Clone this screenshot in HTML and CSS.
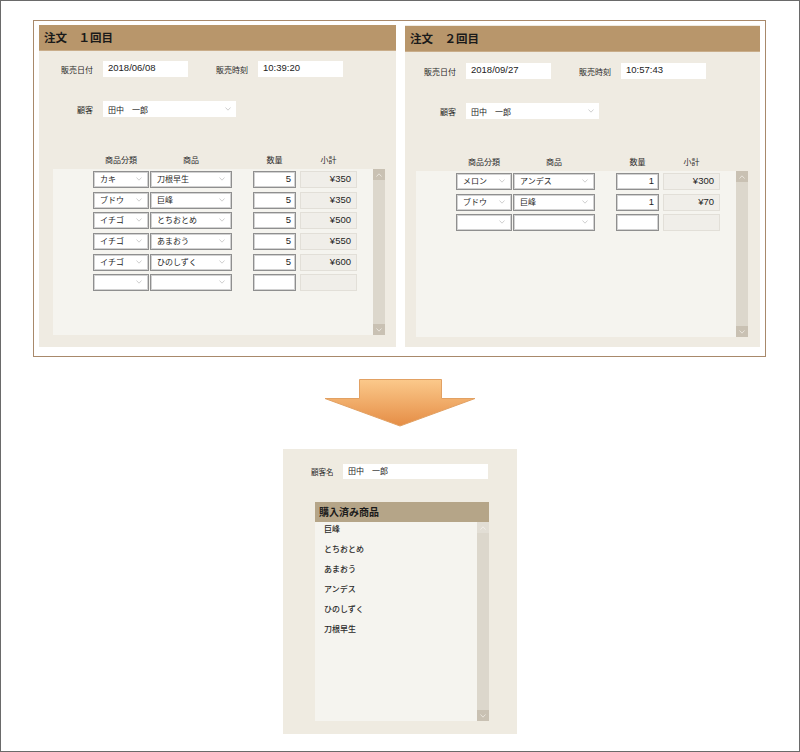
FILE: index.html
```html
<!DOCTYPE html>
<html lang="ja">
<head>
<meta charset="utf-8">
<title>注文履歴</title>
<link rel="stylesheet" href="styles.css">
</head>
<body>
<div class="screen">
  <div class="orders">
    <section class="order order--first">
      <h2 class="order-title">注文　１回目</h2>
      <div class="order-body">
        <div class="fields">
          <span class="lbl">販売日付</span><span class="box box--num">2018/06/08</span>
          <span class="lbl lbl--time">販売時刻</span><span class="box box--num">10:39:20</span>
        </div>
        <div class="fields customer">
          <span class="lbl">顧客</span>
          <span class="box box--select box--cust">田中　一郎<svg class="chev" width="6" height="4" viewBox="0 0 6 4"><polyline points="0.5,0.5 3,3.2 5.5,0.5" fill="none" stroke="#c4c4c4" stroke-width="0.8"/></svg></span>
        </div>
        <div class="grid-head">
          <span class="gh gh-cat">商品分類</span><span class="gh gh-prod">商品</span><span class="gh gh-qty">数量</span><span class="gh gh-sub">小計</span>
        </div>
        <div class="lines">
          <div class="rows">
            <div class="line">
              <span class="cell cell--sel cell--cat">カキ<svg class="chev" width="6" height="4" viewBox="0 0 6 4"><polyline points="0.5,0.5 3,3.2 5.5,0.5" fill="none" stroke="#c4c4c4" stroke-width="0.8"/></svg></span>
              <span class="cell cell--sel cell--prod">刀根早生<svg class="chev" width="6" height="4" viewBox="0 0 6 4"><polyline points="0.5,0.5 3,3.2 5.5,0.5" fill="none" stroke="#c4c4c4" stroke-width="0.8"/></svg></span>
              <span class="cell cell--qty">5</span><span class="cell cell--sub">¥350</span>
            </div>
            <div class="line">
              <span class="cell cell--sel cell--cat">ブドウ<svg class="chev" width="6" height="4" viewBox="0 0 6 4"><polyline points="0.5,0.5 3,3.2 5.5,0.5" fill="none" stroke="#c4c4c4" stroke-width="0.8"/></svg></span>
              <span class="cell cell--sel cell--prod">巨峰<svg class="chev" width="6" height="4" viewBox="0 0 6 4"><polyline points="0.5,0.5 3,3.2 5.5,0.5" fill="none" stroke="#c4c4c4" stroke-width="0.8"/></svg></span>
              <span class="cell cell--qty">5</span><span class="cell cell--sub">¥350</span>
            </div>
            <div class="line">
              <span class="cell cell--sel cell--cat">イチゴ<svg class="chev" width="6" height="4" viewBox="0 0 6 4"><polyline points="0.5,0.5 3,3.2 5.5,0.5" fill="none" stroke="#c4c4c4" stroke-width="0.8"/></svg></span>
              <span class="cell cell--sel cell--prod">とちおとめ<svg class="chev" width="6" height="4" viewBox="0 0 6 4"><polyline points="0.5,0.5 3,3.2 5.5,0.5" fill="none" stroke="#c4c4c4" stroke-width="0.8"/></svg></span>
              <span class="cell cell--qty">5</span><span class="cell cell--sub">¥500</span>
            </div>
            <div class="line">
              <span class="cell cell--sel cell--cat">イチゴ<svg class="chev" width="6" height="4" viewBox="0 0 6 4"><polyline points="0.5,0.5 3,3.2 5.5,0.5" fill="none" stroke="#c4c4c4" stroke-width="0.8"/></svg></span>
              <span class="cell cell--sel cell--prod">あまおう<svg class="chev" width="6" height="4" viewBox="0 0 6 4"><polyline points="0.5,0.5 3,3.2 5.5,0.5" fill="none" stroke="#c4c4c4" stroke-width="0.8"/></svg></span>
              <span class="cell cell--qty">5</span><span class="cell cell--sub">¥550</span>
            </div>
            <div class="line">
              <span class="cell cell--sel cell--cat">イチゴ<svg class="chev" width="6" height="4" viewBox="0 0 6 4"><polyline points="0.5,0.5 3,3.2 5.5,0.5" fill="none" stroke="#c4c4c4" stroke-width="0.8"/></svg></span>
              <span class="cell cell--sel cell--prod">ひのしずく<svg class="chev" width="6" height="4" viewBox="0 0 6 4"><polyline points="0.5,0.5 3,3.2 5.5,0.5" fill="none" stroke="#c4c4c4" stroke-width="0.8"/></svg></span>
              <span class="cell cell--qty">5</span><span class="cell cell--sub">¥600</span>
            </div>
            <div class="line">
              <span class="cell cell--sel cell--cat"><svg class="chev" width="6" height="4" viewBox="0 0 6 4"><polyline points="0.5,0.5 3,3.2 5.5,0.5" fill="none" stroke="#c4c4c4" stroke-width="0.8"/></svg></span>
              <span class="cell cell--sel cell--prod"><svg class="chev" width="6" height="4" viewBox="0 0 6 4"><polyline points="0.5,0.5 3,3.2 5.5,0.5" fill="none" stroke="#c4c4c4" stroke-width="0.8"/></svg></span>
              <span class="cell cell--qty"></span><span class="cell cell--sub"></span>
            </div>
          </div>
          <div class="scrollbar">
            <span class="sb-btn"><svg width="6" height="4" viewBox="0 0 6 4"><polyline points="0.5,3.5 3,0.8 5.5,3.5" fill="none" stroke="#ece8e0" stroke-width="0.9"/></svg></span>
            <span class="sb-track"></span>
            <span class="sb-btn"><svg width="6" height="4" viewBox="0 0 6 4"><polyline points="0.5,0.5 3,3.2 5.5,0.5" fill="none" stroke="#ece8e0" stroke-width="0.9"/></svg></span>
          </div>
        </div>
      </div>
    </section>

    <section class="order order--second">
      <h2 class="order-title">注文　２回目</h2>
      <div class="order-body">
        <div class="fields">
          <span class="lbl">販売日付</span><span class="box box--num">2018/09/27</span>
          <span class="lbl lbl--time">販売時刻</span><span class="box box--num">10:57:43</span>
        </div>
        <div class="fields customer">
          <span class="lbl">顧客</span>
          <span class="box box--select box--cust">田中　一郎<svg class="chev" width="6" height="4" viewBox="0 0 6 4"><polyline points="0.5,0.5 3,3.2 5.5,0.5" fill="none" stroke="#c4c4c4" stroke-width="0.8"/></svg></span>
        </div>
        <div class="grid-head">
          <span class="gh gh-cat">商品分類</span><span class="gh gh-prod">商品</span><span class="gh gh-qty">数量</span><span class="gh gh-sub">小計</span>
        </div>
        <div class="lines">
          <div class="rows">
            <div class="line">
              <span class="cell cell--sel cell--cat">メロン<svg class="chev" width="6" height="4" viewBox="0 0 6 4"><polyline points="0.5,0.5 3,3.2 5.5,0.5" fill="none" stroke="#c4c4c4" stroke-width="0.8"/></svg></span>
              <span class="cell cell--sel cell--prod">アンデス<svg class="chev" width="6" height="4" viewBox="0 0 6 4"><polyline points="0.5,0.5 3,3.2 5.5,0.5" fill="none" stroke="#c4c4c4" stroke-width="0.8"/></svg></span>
              <span class="cell cell--qty">1</span><span class="cell cell--sub">¥300</span>
            </div>
            <div class="line">
              <span class="cell cell--sel cell--cat">ブドウ<svg class="chev" width="6" height="4" viewBox="0 0 6 4"><polyline points="0.5,0.5 3,3.2 5.5,0.5" fill="none" stroke="#c4c4c4" stroke-width="0.8"/></svg></span>
              <span class="cell cell--sel cell--prod">巨峰<svg class="chev" width="6" height="4" viewBox="0 0 6 4"><polyline points="0.5,0.5 3,3.2 5.5,0.5" fill="none" stroke="#c4c4c4" stroke-width="0.8"/></svg></span>
              <span class="cell cell--qty">1</span><span class="cell cell--sub">¥70</span>
            </div>
            <div class="line">
              <span class="cell cell--sel cell--cat"><svg class="chev" width="6" height="4" viewBox="0 0 6 4"><polyline points="0.5,0.5 3,3.2 5.5,0.5" fill="none" stroke="#c4c4c4" stroke-width="0.8"/></svg></span>
              <span class="cell cell--sel cell--prod"><svg class="chev" width="6" height="4" viewBox="0 0 6 4"><polyline points="0.5,0.5 3,3.2 5.5,0.5" fill="none" stroke="#c4c4c4" stroke-width="0.8"/></svg></span>
              <span class="cell cell--qty"></span><span class="cell cell--sub"></span>
            </div>
          </div>
          <div class="scrollbar">
            <span class="sb-btn"><svg width="6" height="4" viewBox="0 0 6 4"><polyline points="0.5,3.5 3,0.8 5.5,3.5" fill="none" stroke="#ece8e0" stroke-width="0.9"/></svg></span>
            <span class="sb-track"></span>
            <span class="sb-btn"><svg width="6" height="4" viewBox="0 0 6 4"><polyline points="0.5,0.5 3,3.2 5.5,0.5" fill="none" stroke="#ece8e0" stroke-width="0.9"/></svg></span>
          </div>
        </div>
      </div>
    </section>
  </div>

  <div class="arrow">
    <svg width="152" height="48" viewBox="0 0 152 48">
      <defs>
        <linearGradient id="ag" x1="0" y1="0" x2="0" y2="1">
          <stop offset="0" stop-color="#fbc98b"/>
          <stop offset="1" stop-color="#e58d45"/>
        </linearGradient>
      </defs>
      <polygon points="35.5,0.5 117.5,0.5 117.5,19.5 151,19.5 76,47 1,19.5 35.5,19.5" fill="url(#ag)" stroke="#e2a163" stroke-width="1"/>
    </svg>
  </div>

  <section class="history">
    <div class="h-fields">
      <span class="h-lbl">顧客名</span><span class="h-box">田中　一郎</span>
    </div>
    <div class="h-list">
      <div class="h-list-title">購入済み商品</div>
      <div class="h-list-body">
        <ul class="h-items">
          <li>巨峰</li>
          <li>とちおとめ</li>
          <li>あまおう</li>
          <li>アンデス</li>
          <li>ひのしずく</li>
          <li>刀根早生</li>
        </ul>
        <div class="scrollbar scrollbar--light">
          <span class="sb-btn sb-btn--up"><svg width="6" height="4" viewBox="0 0 6 4"><polyline points="0.5,3.5 3,0.8 5.5,3.5" fill="none" stroke="#f4f1ec" stroke-width="0.9"/></svg></span>
          <span class="sb-track"></span>
          <span class="sb-btn"><svg width="6" height="4" viewBox="0 0 6 4"><polyline points="0.5,0.5 3,3.2 5.5,0.5" fill="none" stroke="#ece8e0" stroke-width="0.9"/></svg></span>
        </div>
      </div>
    </div>
  </section>
</div>
</body>
</html>
```

FILE: styles.css
```css
* {
  box-sizing: border-box;
}

html, body {
  margin: 0;
  padding: 0;
  background: #ffffff;
}

body {
  font-family: "Liberation Sans", "Noto Sans CJK JP", sans-serif;
  color: #222222;
}

.screen {
  width: 800px;
  height: 752px;
  border: 1px solid #6a6a6a;
  overflow: hidden;
}

/* ---------- top frame with the two orders ---------- */
.orders {
  display: flex;
  align-items: flex-start;
  gap: 9px;
  width: 733px;
  margin: 19px 0 0 32px;
  padding: 4px 5px 9px 5px;
  border: 1px solid #a8896b;
}

.order {
  width: 357px;
  height: 322px;
  background: #efebe2;
}

.order--second {
  width: 355px;
}

.order-title {
  margin: 0;
  height: 26px;
  padding-left: 5px;
  background: #b8966b;
  border-bottom: 1px solid #c9ad8a;
  font-family: "Noto Sans CJK JP", sans-serif;
  font-size: 11.5px;
  font-weight: bold;
  line-height: 25px;
  color: #1a1a1a;
}

.order--second .order-title {
  margin-top: 1px;
}

.order-body {
  padding: 10px 0 12px 3px;
}

.order--second .order-body {
  padding: 11px 0 10px 0;
}

.fields {
  display: flex;
  align-items: center;
  height: 16px;
}

.customer {
  margin-top: 24px;
}

.lbl {
  width: 51px;
  margin-right: 10px;
  text-align: right;
  font-family: "Noto Sans CJK JP", sans-serif;
  font-size: 8px;
  color: #2a2a2a;
}

.lbl--time {
  width: 60px;
}

.box {
  height: 16px;
  background: #ffffff;
  padding-left: 5px;
}

.box--num {
  width: 85px;
  font-size: 9.5px;
  line-height: 13px;
}

.box--select {
  display: flex;
  justify-content: space-between;
  align-items: center;
  padding: 0 5px 0 5px;
  font-family: "Noto Sans CJK JP", sans-serif;
  font-size: 8px;
}

.box--cust {
  width: 133px;
}

.grid-head {
  display: flex;
  height: 12px;
  margin-top: 37px;
  padding-left: 51px;
  font-family: "Noto Sans CJK JP", sans-serif;
  font-size: 8px;
  line-height: 12px;
  color: #2a2a2a;
}

.gh {
  text-align: center;
}

.gh-cat { width: 56px; }
.gh-prod { width: 82px; margin-left: 1px; }
.gh-qty { width: 43px; margin-left: 21px; }
.gh-sub { width: 57px; margin-left: 4px; }

.lines {
  display: flex;
  width: 332px;
  height: 166px;
  margin: 3px 0 0 11px;
  background: #f5f4ef;
}

.rows {
  flex: 1;
  display: flex;
  flex-direction: column;
  gap: 3.7px;
  padding: 2px 0 0 40px;
}

.line {
  display: flex;
  height: 17px;
}

.cell {
  height: 17px;
  background: #ffffff;
  border: 1px solid #8f8f8f;
  box-shadow: inset 0 0 0 1px #d2d2d2;
  font-size: 9.5px;
  line-height: 14px;
  color: #1e1e1e;
}

.cell--sel {
  display: flex;
  justify-content: space-between;
  align-items: center;
  padding: 0 6px 1px 6px;
  font-family: "Noto Sans CJK JP", sans-serif;
  font-size: 8px;
}

.cell--sel .chev {
  margin-left: auto;
}

.cell--cat { width: 56px; }
.cell--prod { width: 82px; margin-left: 1px; }

.cell--qty {
  width: 43px;
  margin-left: 21px;
  padding-right: 4px;
  text-align: right;
}

.cell--sub {
  width: 57px;
  margin-left: 4px;
  padding-right: 5px;
  text-align: right;
  background: #f0eee9;
  border-color: #e2dfd8;
  box-shadow: none;
}

.chev {
  display: block;
  flex: none;
}

/* ---------- scrollbars ---------- */
.scrollbar {
  width: 12px;
  display: flex;
  flex-direction: column;
  background: #dcd7cc;
}

.sb-btn {
  height: 11px;
  display: flex;
  align-items: center;
  justify-content: center;
  background: #c9c1b3;
}

.sb-btn svg {
  display: block;
}

.sb-track {
  flex: 1;
}

.scrollbar--light .sb-btn--up {
  background: #e2ded5;
}

/* ---------- arrow ---------- */
.arrow {
  width: 152px;
  height: 48px;
  margin: 22px auto 0;
}

.arrow svg {
  display: block;
}

/* ---------- purchase history panel ---------- */
.history {
  width: 234px;
  height: 285px;
  margin: 22px auto 0;
  padding: 15px 0 0 0;
  background: #efebe1;
}

.h-fields {
  display: flex;
  align-items: center;
  height: 15px;
  padding-left: 28px;
}

.h-lbl {
  width: 22px;
  margin-right: 10px;
  text-align: right;
  font-family: "Noto Sans CJK JP", sans-serif;
  font-size: 7.5px;
  white-space: nowrap;
  color: #2a2a2a;
}

.h-box {
  width: 145px;
  height: 15px;
  padding-left: 5px;
  background: #ffffff;
  font-family: "Noto Sans CJK JP", sans-serif;
  font-size: 8px;
  line-height: 14px;
  color: #222222;
}

.h-list {
  width: 174px;
  margin: 23px 0 0 32px;
}

.h-list-title {
  height: 20px;
  padding-left: 4px;
  background: #b5a588;
  font-family: "Noto Sans CJK JP", sans-serif;
  font-size: 10px;
  font-weight: bold;
  line-height: 20px;
  color: #1a1a1a;
}

.h-list-body {
  display: flex;
  height: 199px;
  background: #f5f4ef;
}

.h-items {
  flex: 1;
  margin: 0;
  padding: 0 0 0 9px;
  list-style: none;
  display: flex;
  flex-direction: column;
  gap: 6.1px;
}

.h-items li {
  height: 14px;
  font-family: "Noto Sans CJK JP", sans-serif;
  font-size: 8px;
  font-weight: 500;
  line-height: 14px;
  color: #2a2a2a;
}
```
